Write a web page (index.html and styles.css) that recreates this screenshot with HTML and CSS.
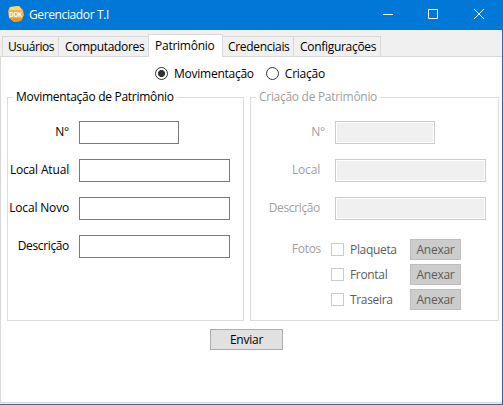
FILE: index.html
```html
<!DOCTYPE html>
<html lang="pt-BR">
<head>
<meta charset="utf-8">
<title>Gerenciador T.I</title>
<link rel="stylesheet" href="styles.css">
</head>
<body>
<div class="window">
  <header class="titlebar">
    <svg class="logo" viewBox="0 0 16 16">
      <path fill="#eeb34a" d="M2 1L11 0L15 4L16 9L13 15L6 16L1 12L0 5Z"/>
      <path fill="#ffd66b" d="M2 1L11 0L14 4H1Z"/>
      <path fill="#e09a25" d="M2 12H15L13 15L6 16Z"/>
      <text x="1.2" y="10.5" textLength="13.2" lengthAdjust="spacingAndGlyphs">DOK</text>
    </svg>
    <span class="title">Gerenciador T.I</span>
    <svg class="controls" viewBox="0 0 138 30">
      <path d="M18 14.5H28M63.5 9.5H72.5V18.5H63.5ZM109 9L119 19M119 9L109 19"/>
    </svg>
  </header>
  <nav class="tabs">
    <span class="tab users">Usuários</span>
    <span class="tab computers">Computadores</span>
    <span class="tab assets active">Patrimônio</span>
    <span class="tab credentials">Credenciais</span>
    <span class="tab settings">Configurações</span>
  </nav>
  <main class="pane">
    <div class="modes">
      <label class="mode"><i class="radio checked"></i><span class="movement">Movimentação</span></label>
      <label class="mode"><i class="radio"></i><span>Criação</span></label>
    </div>
    <div class="groups">
      <section class="group">
        <h2 class="legend">Movimentação de Patrimônio</h2>
        <div class="row"><span class="label">N°</span><i class="field short"></i></div>
        <div class="row"><span class="label">Local Atual</span><i class="field"></i></div>
        <div class="row"><span class="label">Local Novo</span><i class="field"></i></div>
        <div class="row"><span class="label tight">Descrição</span><i class="field"></i></div>
      </section>
      <section class="group disabled">
        <h2 class="legend">Criação de Patrimônio</h2>
        <div class="row number"><span class="label">N°</span><i class="field short"></i></div>
        <div class="row"><span class="label">Local</span><i class="field"></i></div>
        <div class="row"><span class="label tight">Descrição</span><i class="field"></i></div>
        <div class="photos">
          <span class="label">Fotos</span>
          <div class="list">
            <div class="photo"><i class="check"></i><span class="name">Plaqueta</span><span class="button">Anexar</span></div>
            <div class="photo"><i class="check"></i><span class="name">Frontal</span><span class="button">Anexar</span></div>
            <div class="photo"><i class="check"></i><span class="name">Traseira</span><span class="button">Anexar</span></div>
          </div>
        </div>
      </section>
    </div>
    <span class="button send">Enviar</span>
  </main>
</div>
</body>
</html>
```
FILE: styles.css
```css
* { box-sizing: border-box; }
body { margin: 0; font: 12px/16px "Open Sans", "Noto Sans", sans-serif; letter-spacing: -0.25px; color: #000; white-space: nowrap; }
.window { width: 503px; height: 405px; display: flex; flex-direction: column; background: #f0f0f0; border-right: 1px solid #0078d7; border-bottom: 1px solid #0078d7; }
.titlebar { height: 30px; flex: none; display: flex; background: #0078d7; color: #fff; }
.logo { width: 16px; height: 16px; margin: 6px 5px 0 8px; }
.logo text { font: bold 6.5px "Liberation Sans", sans-serif; fill: #fff; letter-spacing: 0; }
.title { padding-top: 7px; letter-spacing: -0.38px; }
.controls { width: 138px; height: 30px; margin-left: auto; margin-right: -1px; fill: none; stroke: #fff; stroke-width: 1; }
.tabs { height: 26px; flex: none; display: flex; align-items: flex-end; padding-left: 2px; }
.tab { height: 20px; padding: 2px 0 0 6px; border: solid #d9d9d9; border-width: 1px 1px 0 0; }
.users { width: 57px; padding-left: 5px; border-left-width: 1px; letter-spacing: -0.4px; }
.computers { width: 89px; border-right: 0; letter-spacing: -0.35px; }
.assets { width: 75px; }
.credentials { width: 71px; padding-left: 5px; letter-spacing: -0.3px; }
.settings { width: 87px; letter-spacing: -0.3px; }
.tab.active { height: 23px; padding-top: 3px; margin-bottom: -1px; border-left-width: 1px; background: #fff; position: relative; }
.pane { height: 347px; flex: none; border: 1px solid #d9d9d9; border-right: 0; background: #fff; display: flex; flex-direction: column; }
.modes { display: flex; padding: 9px 0 0 154px; gap: 12px; height: 33px; }
.mode { display: flex; gap: 6px; height: 16px; }
.radio { width: 13px; height: 13px; margin-top: 1px; border: 1px solid #333; border-radius: 50%; }
.radio.checked { background: radial-gradient(circle, #333 3.3px, transparent 3.8px); }
.groups { display: flex; gap: 6px; padding: 7px 0 0 6px; }
.group { width: 237px; height: 224px; border: 1px solid #dcdcdc; }
.group.disabled { width: 249px; color: #a0a0a0; }
.legend { font: inherit; letter-spacing: -0.29px; margin: -9px 0 0 5px; padding: 0 3px; width: max-content; background: #fff; }
.row { display: flex; gap: 10px; height: 23px; margin-bottom: 15px; }
.legend + .row { margin-top: 16px; }
.label { width: 61px; padding-top: 3px; display: flex; justify-content: flex-end; letter-spacing: -0.17px; }
.label.tight { letter-spacing: -0.35px; }
.field { width: 151px; height: 23px; border: 1px solid #7a7a7a; background: #fff; }
.field.short { width: 100px; }
.disabled .row { gap: 15px; }
.disabled .label { width: 69px; }
.disabled .number { gap: 10px; }
.disabled .number .label { width: 74px; }
.disabled .field { border-color: #ccc; background: #f0f0f0; box-shadow: inset 0 0 0 1px #fff; }
.photos { display: flex; gap: 10px; margin-top: -11px; }
.photos .label { width: 70px; padding-top: 17px; letter-spacing: -0.3px; }
.list { display: grid; gap: 4px; padding-top: 15px; }
.photo { display: flex; height: 21px; color: #5c5c5c; }
.check { width: 13px; height: 13px; margin: 4px 6px 0 0; border: 1px solid #ccc; }
.name { width: 60px; padding-top: 3px; letter-spacing: -0.33px; }
.button { width: 51px; height: 21px; line-height: 19px; text-align: center; border: 1px solid #bfbfbf; background: #ccc; }
.send { width: 73px; margin: 8px 0 0 209px; border-color: #adadad; background: #e1e1e1; }
```
